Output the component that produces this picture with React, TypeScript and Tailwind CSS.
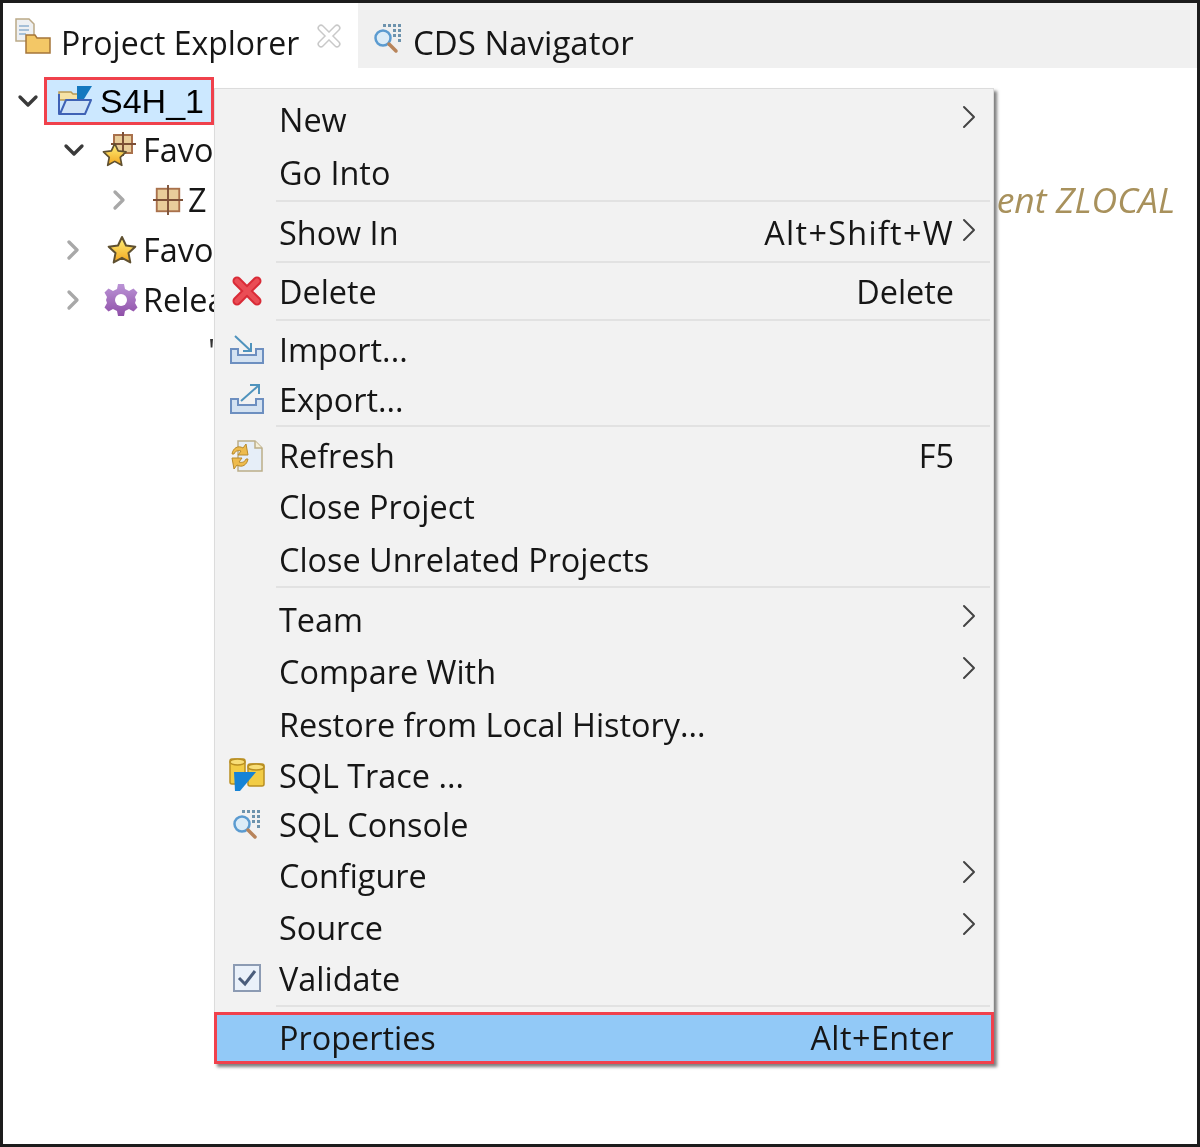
/**
 * Eclipse project explorer with the project context menu open
 */

import { ChevronDown, ChevronRight } from 'lucide-react';
import type { ReactNode } from 'react';

function ExplorerIcon() {
  return (
    <svg width="36" height="36" viewBox="0 0 36 36">
      <path d="M1 1h13l5 5v17H1z" fill="#eef0f2" stroke="#bba987" strokeWidth="1.5" />
      <path d="M4 8h10M4 12h10M4 16h7" stroke="#8fb0d0" strokeWidth="1.5" />
      <path d="M11 17h9l2 3h13v15H11z" fill="#f3c766" stroke="#a5763a" strokeWidth="1.5" />
    </svg>
  );
}

function NavigatorIcon() {
  return (
    <svg width="32" height="32" viewBox="0 0 32 32">
      <g fill="#6d93ad">
        <rect x="11" y="2" width="3" height="3" />
        <rect x="16" y="2" width="3" height="3" />
        <rect x="21" y="2" width="3" height="3" />
        <rect x="26" y="2" width="3" height="3" />
        <rect x="21" y="7" width="3" height="3" />
        <rect x="26" y="7" width="3" height="3" />
        <rect x="21" y="12" width="3" height="3" />
        <rect x="26" y="12" width="3" height="3" />
        <rect x="26" y="17" width="3" height="3" />
      </g>
      <circle cx="11" cy="16" r="7.5" fill="#dcecf7" stroke="#5b9bd0" strokeWidth="2.5" />
      <path d="M17 22l7 7" stroke="#b8845a" strokeWidth="3.5" strokeLinecap="round" />
    </svg>
  );
}

function ProjectIcon() {
  return (
    <svg width="38" height="34" viewBox="0 0 38 34">
      <path d="M3 8h12l2 2h9v6H3z" fill="#f6e3a6" stroke="#b89a55" strokeWidth="1.5" />
      <path d="M3 10v20h26l6-14H10L4 30" fill="#cfe3f7" stroke="#3f62b5" strokeWidth="2" strokeLinejoin="round" />
      <path d="M21 2h15l-8 13h-7z" fill="#1478bf" />
    </svg>
  );
}

function GridIcon() {
  return (
    <svg width="30" height="30" viewBox="0 0 32 32">
      <rect x="4" y="4" width="24" height="24" fill="#e8cd9a" stroke="#a9714c" strokeWidth="2" />
      <path d="M16 0v32M0 16h32" stroke="#7c5037" strokeWidth="2" />
    </svg>
  );
}

function StarShape() {
  return (
    <path
      d="M15 2l4 8.5 9.3 1.2-6.8 6.4 1.800 9.300L15 22.800l-8.300 4.600 1.800-9.300-6.800-6.400L11 10.500z"
      fill="url(#star)"
      stroke="#5f5030"
      strokeWidth="2"
      strokeLinejoin="round"
    />
  );
}

function StarIcon() {
  return (
    <svg width="30" height="30" viewBox="0 0 30 30">
      <defs>
        <linearGradient id="star" x1="0" y1="0" x2="0" y2="1">
          <stop offset="0" stopColor="#fff27a" />
          <stop offset="1" stopColor="#f2a51e" />
        </linearGradient>
      </defs>
      <StarShape />
    </svg>
  );
}

function FavoritePackageIcon() {
  return (
    <svg width="36" height="36" viewBox="0 0 36 36">
      <rect x="12" y="3" width="18" height="18" fill="#e8cd9a" stroke="#a9714c" strokeWidth="2" />
      <path d="M21 0v24M9 12h25" stroke="#7c5037" strokeWidth="2" />
      <g transform="translate(0 10) scale(0.85)">
        <StarShape />
      </g>
    </svg>
  );
}

function GearIcon() {
  return (
    <svg width="34" height="34" viewBox="0 0 34 34">
      <defs>
        <linearGradient id="gear" x1="0" y1="0" x2="0" y2="1">
          <stop offset="0" stopColor="#bb94d6" />
          <stop offset="1" stopColor="#8f4fa8" />
        </linearGradient>
      </defs>
      <path
        d="M14 1h6l1 5 4 2 4.500-2.500 4 4L31 14l1 3-1 3 2.500 4.500-4 4L25 26l-4 2-1 5h-6l-1-5-4-2-4.500 2.500-4-4L3 20l-1-3 1-3-2.500-4.500 4-4L9 8l4-2z"
        fill="url(#gear)"
      />
      <circle cx="17" cy="17" r="6" fill="#ffffff" />
    </svg>
  );
}

function CloseIcon() {
  return (
    <svg width="24" height="24" viewBox="0 0 24 24">
      <path d="M4 4l16 16M20 4L4 20" stroke="#c9c9c9" strokeWidth="7" strokeLinecap="round" />
      <path d="M4 4l16 16M20 4L4 20" stroke="#ffffff" strokeWidth="4" strokeLinecap="round" />
    </svg>
  );
}

function DeleteIcon() {
  return (
    <svg width="32" height="32" viewBox="0 0 32 32">
      <path d="M6 6l20 20M26 6L6 26" stroke="#d92b37" strokeWidth="9" strokeLinecap="round" />
      <path d="M6 6l20 20M26 6L6 26" stroke="#ea4d55" strokeWidth="5" strokeLinecap="round" />
    </svg>
  );
}

function ImportIcon() {
  return (
    <svg width="36" height="30" viewBox="0 0 36 30">
      <path d="M2 14h7v6h18v-6h7v14H2z" fill="#d4e2f1" stroke="#6d8fc0" strokeWidth="2" />
      <path d="M6 1l16 15M22 8v8h-8" fill="none" stroke="#4f93bd" strokeWidth="2" />
    </svg>
  );
}

function ExportIcon() {
  return (
    <svg width="36" height="32" viewBox="0 0 36 32">
      <path d="M2 16h7v6h18v-6h7v14H2z" fill="#d4e2f1" stroke="#6d8fc0" strokeWidth="2" />
      <path d="M12 18L29 3M21 2h9v9" fill="none" stroke="#4f93bd" strokeWidth="2" />
    </svg>
  );
}

function RefreshIcon() {
  return (
    <svg width="34" height="34" viewBox="0 0 34 34">
      <path d="M8 2h17l7 7v23H8z" fill="#e6eef8" stroke="#bcae88" strokeWidth="1.5" />
      <path d="M25 2v7h7" fill="#f5efd8" stroke="#bcae88" strokeWidth="1.5" />
      <path d="M2 15c1-6 6-9 11-6l3-4 2 11-10 0 3-4c-3-1-6 0-7 3z" fill="#eebb4d" stroke="#b88a2c" />
      <path d="M18 20c-1 6-6 9-11 6l-3 4-2-11 10 0-3 4c3 1 6 0 7-3z" fill="#eebb4d" stroke="#b88a2c" />
    </svg>
  );
}

function TraceIcon() {
  return (
    <svg width="36" height="34" viewBox="0 0 36 34">
      <rect x="1" y="1" width="15" height="25" rx="2" fill="#f2cc45" stroke="#b98f22" strokeWidth="1.5" />
      <ellipse cx="8.500" cy="4" rx="7.500" ry="3" fill="#f8de78" stroke="#b98f22" strokeWidth="1.5" />
      <rect x="19" y="6" width="16" height="22" rx="2" fill="#f2cc45" stroke="#b98f22" strokeWidth="1.5" />
      <ellipse cx="27" cy="9" rx="8" ry="3" fill="#f8de78" stroke="#b98f22" strokeWidth="1.5" />
      <path d="M5 14h22L11 33H6z" fill="#1583d6" />
    </svg>
  );
}

function CheckIcon() {
  return (
    <svg width="28" height="28" viewBox="0 0 28 28">
      <rect x="1" y="1" width="26" height="26" fill="#eaf1fa" stroke="#8c9bb3" strokeWidth="2" />
      <path d="M6 14l6 6 10-13" fill="none" stroke="#4a5d7c" strokeWidth="3" />
    </svg>
  );
}

type MenuEntry = {
  label?: string;
  height?: string;
  icon?: ReactNode;
  shortcut?: string;
  shortcutClass?: string;
  submenu?: boolean;
};

const menuEntries: MenuEntry[] = [
  { label: 'New', height: 'h-[53px]', submenu: true },
  { label: 'Go Into', height: 'h-[54px] pb-[2px]' },
  {},
  { label: 'Show In', height: 'h-[59px] pt-[2px]', shortcut: 'Alt+Shift+W', shortcutClass: 'tracking-[1.3px]', submenu: true },
  {},
  { label: 'Delete', height: 'h-[56px]', icon: <DeleteIcon />, shortcut: 'Delete' },
  {},
  { label: 'Import...', height: 'h-[57px]', icon: <ImportIcon /> },
  { label: 'Export...', height: 'h-[47px] pb-[5px]', icon: <ExportIcon /> },
  {},
  { label: 'Refresh', height: 'h-[57px]', icon: <RefreshIcon />, shortcut: 'F5' },
  { label: 'Close Project', height: 'h-[50px] pb-[6px]' },
  { label: 'Close Unrelated Projects', height: 'h-[52px] pb-[2px]' },
  {},
  { label: 'Team', height: 'h-[60px] pt-[2px]', submenu: true },
  { label: 'Compare With', height: 'h-[50px] pb-[4px]', submenu: true },
  { label: 'Restore from Local History...', height: 'h-[52px]' },
  { label: 'SQL Trace ...', height: 'h-[52px] pb-[2px]', icon: <TraceIcon /> },
  { label: 'SQL Console', height: 'h-[48px] pb-[4px]', icon: <NavigatorIcon /> },
  { label: 'Configure', height: 'h-[52px] pb-[2px]', submenu: true },
  { label: 'Source', height: 'h-[52px] pb-[2px]', submenu: true },
  { label: 'Validate', height: 'h-[51px] pb-[3px]', icon: <CheckIcon /> },
  {},
];

function ContextMenu() {
  return (
    <div className="absolute left-[211px] top-[85px] w-[780px] border border-[#dcdcdc] bg-[#f2f2f2] pt-[4px] text-[32.4px] text-[#161616] shadow-[3px_3px_3px_rgba(0,0,0,0.5)]">
      {menuEntries.map((entry, i) =>
        entry.label ? (
          <div key={entry.label} className={`flex items-center ${entry.height}`}>
            <div className="flex w-[64px] shrink-0 items-center justify-center pr-[1px]">{entry.icon}</div>
            <span>{entry.label}</span>
            {entry.shortcut && <span className={`ml-auto ${entry.shortcutClass ?? ''}`}>{entry.shortcut}</span>}
            <div className={`flex w-[39px] shrink-0 items-center justify-center pr-[9px] ${entry.shortcut ? '' : 'ml-auto'}`}>
              {entry.submenu && <ChevronRight size={40} strokeWidth={1.2} className="-mt-[6px] shrink-0 text-[#444444]" />}
            </div>
          </div>
        ) : (
          <div key={i} className="ml-[61px] mr-[3px] h-[2px] bg-[#e2e2e2]" />
        ),
      )}
      <div className="-mx-[1px] -mb-[1px] mt-[5px] flex h-[52px] items-center border-[3px] border-[#f0414c] bg-[#92c9f7] pb-[2px]">
        <div className="w-[62px] shrink-0" />
        <span>Properties</span>
        <span className="ml-auto mr-[37px] tracking-[0.45px]">Alt+Enter</span>
      </div>
    </div>
  );
}

function Tree() {
  return (
    <div className="flex flex-col pt-[9px] text-[32.4px] text-[#161616]">
      <div className="flex h-[48px] items-center">
        <ChevronDown size={32} strokeWidth={2.5} className="ml-[9px] text-[#3a3a3a]" />
        <div className="flex h-[48px] w-[170px] items-center border-[3px] border-[#f0414c] bg-[#cce8ff] pl-[9px] font-['Liberation_Sans',sans-serif] text-[34px] text-black">
          <ProjectIcon />
          <span className="ml-[6px]">S4H_1</span>
        </div>
      </div>
      <div className="flex h-[50px] items-center">
        <ChevronDown size={32} strokeWidth={2.5} className="ml-[55px] text-[#3a3a3a]" />
        <div className="ml-[12px]"><FavoritePackageIcon /></div>
        <span className="mb-[2px] ml-[5px]">Favo</span>
      </div>
      <div className="flex h-[50px] items-center">
        <ChevronRight size={32} strokeWidth={2.5} className="ml-[100px] text-[#a8a8a8]" />
        <div className="ml-[18px]"><GridIcon /></div>
        <span className="mb-[2px] ml-[5px]">Z</span>
        <span className="ml-auto mr-[22px] text-[35.5px] italic text-[#a8915c]">ent ZLOCAL</span>
      </div>
      <div className="flex h-[50px] items-center">
        <ChevronRight size={32} strokeWidth={2.5} className="ml-[54px] text-[#a8a8a8]" />
        <div className="ml-[18px]"><StarIcon /></div>
        <span className="mb-[2px] ml-[6px]">Favo</span>
      </div>
      <div className="flex h-[50px] items-center">
        <ChevronRight size={32} strokeWidth={2.5} className="ml-[54px] text-[#a8a8a8]" />
        <div className="ml-[15px]"><GearIcon /></div>
        <span className="mb-[2px] ml-[5px]">Relea</span>
      </div>
      <div className="flex h-[50px] items-center pl-[205px] text-[#333333]">'</div>
    </div>
  );
}

export default function App() {
  return (
    <div className="relative h-[1147px] w-[1200px] overflow-hidden border-[3px] border-[#1c1c1c] bg-white font-['Open_Sans',sans-serif] blur-[0.5px]">
      <div className="flex h-[65px] bg-[#f0f0f0] text-[#161616]">
        <div className="flex w-[355px] items-center bg-white pt-[14px] text-[32px]">
          <div className="ml-[12px] -mt-[14px]"><ExplorerIcon /></div>
          <span className="ml-[10px]">Project Explorer</span>
          <div className="ml-[18px] -mt-[14px]"><CloseIcon /></div>
        </div>
        <div className="flex items-center pl-[14px] pt-[14px] text-[33px]">
          <div className="-mt-[10px]"><NavigatorIcon /></div>
          <span className="ml-[9px]">CDS Navigator</span>
        </div>
      </div>
      <Tree />
      <ContextMenu />
    </div>
  );
}
